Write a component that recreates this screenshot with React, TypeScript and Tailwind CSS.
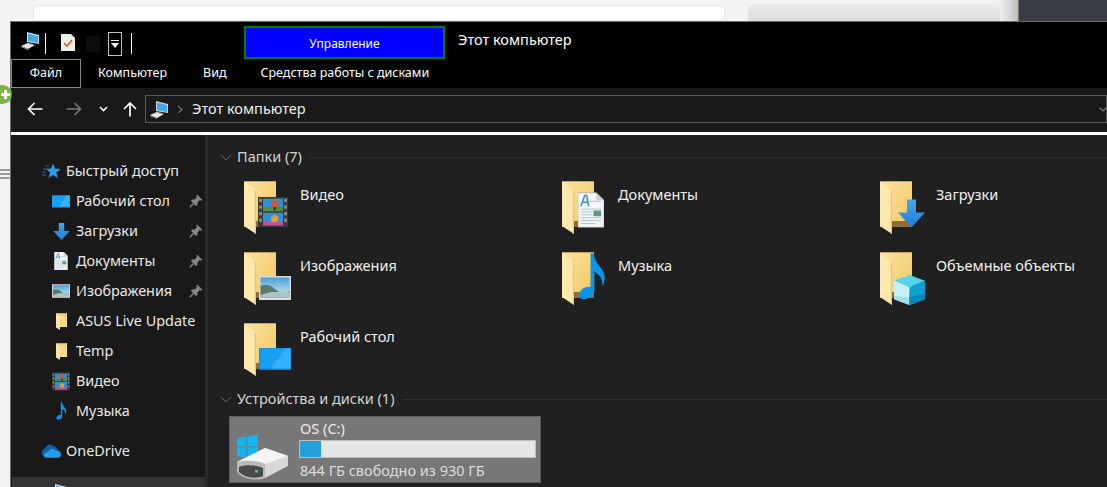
import type { ReactNode } from "react";

const FONT = "font-['Noto_Sans','Open_Sans',sans-serif]";

function PcIcon() {
  return (
    <svg width="20" height="19" viewBox="0 0 20 19">
      <path d="M7 1 L19 4 V13 L7 11 Z" fill="#cfd8e0" />
      <path d="M8 2.5 L18 5 V12 L8 10 Z" fill="#3fa9f0" />
      <path d="M1 15 L8 12 L15 14 L8 18 Z" fill="#e8e8e8" />
      <path d="M1 15 L8 18 V19 L1 16 Z" fill="#9a9a9a" />
      <path d="M10 12 L13 13 L12 14 L9 13 Z" fill="#888" />
    </svg>
  );
}

function Pin() {
  return (
    <svg width="14" height="14" viewBox="0 0 14 14" fill="#858585">
      <path d="M8 0.5 L13.5 6 L12 6.8 L10.8 6 L8.5 8.5 L8.5 11 L7 12 L2 7 L3 5.5 L5.5 5.5 L8 3.2 L7.2 2 Z" />
      <path d="M4 9 L5 10 L1.5 13.5 L0.5 13.5 V12.5 Z" />
    </svg>
  );
}

function SmallFolder() {
  return (
    <svg width="12" height="17" viewBox="0 0 12 17">
      <rect x="1" y="0" width="11" height="14" fill="#f2cf74" />
      <path d="M1 0 H11 V1 H1 Z" fill="#c5a765" />
      <path d="M1 0.5 L5 3 V17 L1 14.5 Z" fill="#fbe6a6" />
      <path d="M5 3 H12 V14 H5 Z" fill="#f7d988" />
    </svg>
  );
}

function Film({ w, h }: { w: number; h: number }) {
  return (
    <svg width={w} height={h} viewBox="0 0 18 18">
      <rect width="18" height="18" fill="#3a3a3a" />
      <g fill="#8c8c8c">
        <rect x="0.7" y="1" width="1.6" height="2" />
        <rect x="0.7" y="5" width="1.6" height="2" />
        <rect x="0.7" y="9" width="1.6" height="2" />
        <rect x="0.7" y="13" width="1.6" height="2" />
        <rect x="15.7" y="1" width="1.6" height="2" />
        <rect x="15.7" y="5" width="1.6" height="2" />
        <rect x="15.7" y="9" width="1.6" height="2" />
        <rect x="15.7" y="13" width="1.6" height="2" />
      </g>
      <rect x="3" y="1" width="12" height="7.5" fill="#2f8fd8" />
      <rect x="3" y="9.5" width="12" height="7.5" fill="#2f8fd8" />
      <rect x="3" y="6" width="12" height="2.5" fill="#4f8f3c" />
      <rect x="3" y="14.5" width="12" height="2.5" fill="#c04fa0" />
      <circle cx="10" cy="4" r="2.2" fill="#d8552c" />
      <circle cx="10" cy="13" r="2.2" fill="#e0a030" />
      <rect x="9.4" y="6" width="1.2" height="2" fill="#222" />
    </svg>
  );
}

function Picture({ w, h }: { w: number; h: number }) {
  return (
    <svg width={w} height={h} viewBox="0 0 32 24">
      <defs>
        <linearGradient id="sky" x1="0" y1="0" x2="0" y2="1">
          <stop offset="0" stopColor="#4d9fd6" />
          <stop offset="1" stopColor="#d6ecf5" />
        </linearGradient>
      </defs>
      <rect width="32" height="24" fill="#d9dde0" />
      <rect x="1.5" y="1.5" width="29" height="20" fill="url(#sky)" />
      <path d="M1.5 10 Q10 7 16 13 T30.5 15 V21.5 H1.5 Z" fill="#5a7a6a" />
      <path d="M12 16 H30.5 V21.5 H1.5 V19 Z" fill="#a8c6c8" />
    </svg>
  );
}

function BlueScreen({ w, h }: { w: number; h: number }) {
  return (
    <svg width={w} height={h} viewBox="0 0 32 22">
      <rect width="32" height="22" fill="#0f7fd0" />
      <rect x="0.5" y="0.5" width="31" height="20" fill="#17a0f5" />
      <path d="M12 20.5 L26 0.5 H31.5 V20.5 Z" fill="#33b1ff" />
    </svg>
  );
}

function DownArrow({ w, h }: { w: number; h: number }) {
  return (
    <svg width={w} height={h} viewBox="0 0 27 28">
      <defs>
        <linearGradient id="arr" x1="0" y1="0" x2="0" y2="1">
          <stop offset="0" stopColor="#45a5ee" />
          <stop offset="1" stopColor="#1f7fd6" />
        </linearGradient>
      </defs>
      <path d="M9 0 H18 V13 H27 L13.5 28 L0 13 H9 Z" fill="url(#arr)" />
    </svg>
  );
}

function Doc({ w, h }: { w: number; h: number }) {
  return (
    <svg width={w} height={h} viewBox="0 0 27 36">
      <path d="M0 0 H19 L27 8 V36 H0 Z" fill="#f4f5f6" stroke="#9a9a9a" strokeWidth="0.6" />
      <path d="M19 0 V8 H27 Z" fill="#c9ccd0" />
      <path d="M3 14 L7 3 L9 3 L11 14 M5 10 H10" fill="none" stroke="#3f8fd8" strokeWidth="1.6" />
      <g stroke="#a9c4d8" strokeWidth="1">
        <line x1="12" y1="9" x2="24" y2="9" />
        <line x1="3" y1="17" x2="24" y2="17" />
        <line x1="3" y1="20" x2="15" y2="20" />
        <line x1="3" y1="23" x2="15" y2="23" />
        <line x1="3" y1="26" x2="24" y2="26" />
        <line x1="3" y1="29" x2="24" y2="29" />
        <line x1="3" y1="32" x2="18" y2="32" />
      </g>
      <rect x="16" y="18.5" width="8" height="6" fill="#5c9a8a" />
    </svg>
  );
}

function Note({ w, h }: { w: number; h: number }) {
  return (
    <svg width={w} height={h} viewBox="0 0 28 48">
      <path
        d="M12 0 H15.5 C16 8 20 11 24 17 C28 23 27 30 24 34 C24.5 28 23 23 16 19 V38 C16 44 9 48 4.5 47.5 C0 47 -1 42 2 38.5 C5 35 9 34 12 35 Z"
        fill="#0a94ea"
      />
    </svg>
  );
}

function Cube() {
  return (
    <svg width="31" height="30" viewBox="0 0 32 31">
      <path d="M16 0 L32 6 L16 13 L0 6 Z" fill="#57d3ea" />
      <path d="M0 6 L16 13 V31 L0 25 Z" fill="#c8f0f8" />
      <path d="M0 21 L16 24 V31 L0 25 Z" fill="#9fe2ee" />
      <path d="M32 6 L16 13 V31 L32 25 Z" fill="#0aa2d0" />
      <path d="M32 19 L16 23 V31 L32 25 Z" fill="#0b86b8" />
    </svg>
  );
}

function Drive() {
  return (
    <svg width="52" height="48" viewBox="0 0 52 48">
      <g fill="#14b4f2">
        <path d="M0 4 L9.5 2.5 V12.5 H0 Z" />
        <path d="M10.5 2.3 L21 0.5 V12.5 H10.5 Z" />
        <path d="M0 13.5 H9.5 V23.5 L0 22 Z" />
        <path d="M10.5 13.5 H21 V25.5 L10.5 23.7 Z" />
      </g>
      <path d="M0 28 L28 14 L51 22 V28 L23 44 L0 34 Z" fill="#e4e4e4" />
      <path d="M28 14 L51 22 L29 30 L0 28 Z" fill="#f4f4f4" />
      <path d="M0 28 C6 26 22 26 28 30 V44 C20 47 6 46 0 38 Z" fill="#b9b9b9" />
      <path d="M2 33 C8 30 20 31 26 34 V42 C18 45 8 44 2 38 Z" fill="#4a4a4a" />
      <path d="M28 30 L51 22 V32 L28 44 Z" fill="#d8d8d8" />
      <rect x="18" y="36" width="3" height="2.5" fill="#3ddc5a" />
    </svg>
  );
}

function Tile({ name, overlay, children }: { name: string; overlay: string; children: ReactNode }) {
  return (
    <div className="flex h-[71px] items-start">
      <div className="relative h-[53px] w-[48px] shrink-0">
        <svg width="32" height="53" viewBox="0 0 32 53" className="block">
          <defs>
            <linearGradient id="fold" x1="0" y1="0" x2="1" y2="1">
              <stop offset="0" stopColor="#fbe3a0" />
              <stop offset="1" stopColor="#f2c661" />
            </linearGradient>
          </defs>
          <rect x="0" y="0" width="32" height="46" fill="url(#fold)" />
          <rect x="0" y="0" width="32" height="1" fill="#bfa266" />
          <rect x="12" y="40" width="20" height="6" fill="#8a6f3c" />
          <path d="M0 1 L12 10 V53 L0 45 Z" fill="#fde9ae" />
          <path d="M12 10 V53 L10.8 52 V9 Z" fill="#e9c778" />
        </svg>
        <div className={`absolute flex items-end ${overlay}`}>{children}</div>
      </div>
      <span className="ml-2 mt-[3px] text-[14.5px] leading-5 text-[#f0f0f0]">{name}</span>
    </div>
  );
}

function GroupHeader({ title }: { title: string }) {
  return (
    <div className="flex h-5 items-center">
      <svg width="12" height="7" viewBox="0 0 12 7" className="shrink-0">
        <path d="M1 1 L6 6 L11 1" fill="none" stroke="#6a6a6a" strokeWidth="1" />
      </svg>
      <span className="ml-[5px] whitespace-nowrap text-[14.5px] text-[#d4d4d4]">{title}</span>
      <div className="ml-2 h-px flex-1 bg-[#2e2e2e]" />
    </div>
  );
}

function NavRow({
  icon,
  label,
  pinned,
  indent = true,
}: {
  icon: ReactNode;
  label: string;
  pinned?: boolean;
  indent?: boolean;
}) {
  return (
    <div className={`flex h-[30px] shrink-0 items-center ${indent ? "pl-[41px]" : "pl-[30px]"}`}>
      <div className={`flex shrink-0 items-center justify-center ${indent ? "w-[18px]" : "w-[20px]"}`}>
        {icon}
      </div>
      <span className={`whitespace-nowrap text-[14.4px] text-[#e8e8e8] ${indent ? "ml-[6px]" : "ml-[5px]"}`}>
        {label}
      </span>
      {pinned && (
        <div className="ml-auto mr-[2px]">
          <Pin />
        </div>
      )}
    </div>
  );
}

function Sidebar() {
  return (
    <aside className="flex w-[194px] shrink-0 flex-col overflow-hidden bg-[#191919] pt-[21px]">
      <NavRow
        indent={false}
        label="Быстрый доступ"
        icon={
          <svg width="20" height="16" viewBox="0 0 20 16">
            <path d="M12 0.5 L14 5.5 L19.5 6 L15.3 9.5 L16.7 15 L12 12 L7.5 15 L9 9.5 L5 6 L10 5.5 Z" fill="#2b9bec" />
            <path d="M4 3 H8 M2 6 H6 M1 9 H5 M1 12 H5" stroke="#1d6fb0" strokeWidth="1" />
          </svg>
        }
      />
      <NavRow pinned label="Рабочий стол" icon={<BlueScreen w={18} h={13} />} />
      <NavRow pinned label="Загрузки" icon={<DownArrow w={17} h={17} />} />
      <NavRow pinned label="Документы" icon={<Doc w={14} h={18} />} />
      <NavRow pinned label="Изображения" icon={<Picture w={18} h={14} />} />
      <NavRow label="ASUS Live Update" icon={<SmallFolder />} />
      <NavRow label="Temp" icon={<SmallFolder />} />
      <NavRow label="Видео" icon={<Film w={18} h={19} />} />
      <NavRow label="Музыка" icon={<Note w={11} h={18} />} />
      <div className="h-[10px] shrink-0" />
      <NavRow
        indent={false}
        label="OneDrive"
        icon={
          <svg width="21" height="14" viewBox="0 0 21 14">
            <path d="M4 5 C5 1 10 -1 13 2 C15 2 17 4 17 6 L8 12 H3 C0 11 0 6 4 5 Z" fill="#0a62b8" />
            <path d="M8 7 C10 4 14 4 15 6.5 C18 5.5 21 8 21 11 C21 13 19 14 18 14 H6 C3 14 2 11 4 9.5 C5 8.5 7 8 8 7 Z" fill="#2a9be8" />
          </svg>
        }
      />
      <div className="ml-px mt-[11px] flex h-[30px] shrink-0 items-center bg-[#333333] pl-[36px]">
        <PcIcon />
        <span className="-ml-px text-[14.4px] text-[#e8e8e8]">Этот компьютер</span>
      </div>
    </aside>
  );
}

export default function App() {
  return (
    <div className={`${FONT} relative flex h-[487px] w-[1107px] flex-col overflow-hidden bg-[#f3f3f3]`}>
      {/* page behind the window */}
      <div className="flex h-[21px] shrink-0 items-stretch">
        <div className="ml-[33px] mt-[5px] w-[692px] rounded-t-sm border border-[#e8e8e8] bg-white" />
        <div className="ml-[23px] mt-[4px] w-[252px] rounded-t-sm bg-gradient-to-b from-[#ececec] to-[#dcdcdc]" />
        <div className="w-[18px] bg-gradient-to-r from-[#f0f0f0] to-[#bdbdbd]" />
        <div className="flex-1 border-l border-[#777] bg-[#3a3d44]" />
      </div>

      <div className="flex min-h-0 flex-1">
        {/* left strip with the collapsed grip */}
        <div className="flex w-[10px] shrink-0 flex-col pt-[148px]">
          <div className="h-[2px] bg-[#9a9a9a]" />
          <div className="mt-[2px] h-[2px] bg-[#9a9a9a]" />
          <div className="mt-[2px] h-[2px] bg-[#9a9a9a]" />
        </div>

        <div className="flex min-w-0 flex-1 flex-col border-l border-t border-[#6e6e6e] bg-black">
          {/* quick access and contextual tab */}
          <div className="flex h-[37px] shrink-0 items-stretch">
            <div className="ml-[9px] mt-[9px] h-[19px]">
              <PcIcon />
            </div>
            <div className="ml-[5px] mt-[11px] h-[21px] w-px bg-white" />
            <div className="ml-[15px] mt-[12px]">
              <svg width="14" height="17" viewBox="0 0 14 17">
                <path d="M0 0 H10 L14 4 V17 H0 Z" fill="#f2efe8" />
                <path d="M3 9 L6 12 L11 6" fill="none" stroke="#e8541c" strokeWidth="1.6" />
              </svg>
            </div>
            <div className="ml-[11px] mt-[14px] h-[16px] w-[14px] bg-[#0d0d0d]" />
            <div className="ml-[8px] mt-[10px] flex h-[24px] w-[14px] flex-col items-center justify-center border border-[#c0c0c0]">
              <div className="h-px w-[8px] bg-white" />
              <svg width="8" height="5" viewBox="0 0 8 5" className="mt-[2px]">
                <path d="M0 0 H8 L4 5 Z" fill="#fff" />
              </svg>
            </div>
            <div className="ml-[9px] mt-[11px] h-[21px] w-px bg-white" />
            <div className="ml-[112px] mt-[4px] flex w-[201px] items-center justify-center border-2 border-[#008000] bg-[#0000ff] pt-[2px] text-[12px] text-white">
              Управление
            </div>
            <span className="ml-[13px] mt-[7px] text-[14.5px] text-white">Этот компьютер</span>
          </div>

          {/* ribbon tabs */}
          <div className="flex h-[29px] shrink-0 items-stretch text-[12.5px] text-white">
            <div className="flex w-[70px] items-center justify-center border border-[#8a8a8a]">Файл</div>
            <span className="ml-[17px] self-center">Компьютер</span>
            <span className="ml-[36px] self-center">Вид</span>
            <span className="ml-[34px] self-center">Средства работы с дисками</span>
          </div>

          {/* navigation bar */}
          <div className="flex h-[44px] shrink-0 items-center bg-[#191919] pb-[2px] pl-[16px]">
            <svg width="16" height="14" viewBox="0 0 16 14">
              <path d="M15.5 7 H2 M7.5 1 L1.5 7 L7.5 13" fill="none" stroke="#fff" strokeWidth="1.7" />
            </svg>
            <svg width="16" height="14" viewBox="0 0 16 14" className="ml-[23px]">
              <path d="M0.5 7 H14 M8.5 1 L14.5 7 L8.5 13" fill="none" stroke="#777" strokeWidth="1.7" />
            </svg>
            <svg width="9" height="6" viewBox="0 0 9 6" className="ml-[17px]">
              <path d="M1 1 L4.5 4.5 L8 1" fill="none" stroke="#fff" strokeWidth="1.6" />
            </svg>
            <svg width="14" height="16" viewBox="0 0 14 16" className="ml-[15px]">
              <path d="M7 15.5 V2 M1 8 L7 2 L13 8" fill="none" stroke="#fff" strokeWidth="1.7" />
            </svg>
            <div className="ml-[8px] flex h-[28px] flex-1 items-center border border-[#5a5a5a] pl-[3px]">
              <PcIcon />
              <svg width="6" height="9" viewBox="0 0 6 9" className="ml-[8px]">
                <path d="M1 1 L5 4.5 L1 8" fill="none" stroke="#6e6e6e" strokeWidth="1.4" />
              </svg>
              <span className="ml-[9px] text-[14.5px] text-[#f0f0f0]">Этот компьютер</span>
              <svg width="8" height="5" viewBox="0 0 8 5" className="ml-auto -mr-[1px]">
                <path d="M0.5 0.5 L4 4 L7.5 0.5" fill="none" stroke="#777" strokeWidth="1.2" />
              </svg>
            </div>
          </div>

          {/* white rule under the nav bar */}
          <div className="h-[3px] shrink-0 bg-white" />

          <div className="flex min-h-0 flex-1">
            <Sidebar />
            <div className="w-[3px] shrink-0 bg-[#2a2a2a]" />
            <main className="min-w-0 flex-1 bg-[#202020] pl-[12px] pt-[12px]">
              <GroupHeader title="Папки (7)" />
              <div className="mt-[14px] grid grid-cols-[318px_318px_1fr] pl-[24px]">
                <Tile name="Видео" overlay="right-[4px] bottom-[5px]">
                  <Film w={30} h={34} />
                </Tile>
                <Tile name="Документы" overlay="right-[6px] bottom-[6px]">
                  <Doc w={26} h={36} />
                </Tile>
                <Tile name="Загрузки" overlay="right-[3px] bottom-[6px]">
                  <DownArrow w={27} h={29} />
                </Tile>
                <Tile name="Изображения" overlay="right-[1px] bottom-[5px]">
                  <Picture w={32} h={24} />
                </Tile>
                <Tile name="Музыка" overlay="right-[4px] bottom-[4px]">
                  <Note w={27} h={49} />
                </Tile>
                <Tile name="Объемные объекты" overlay="right-[3px] bottom-0">
                  <Cube />
                </Tile>
                <Tile name="Рабочий стол" overlay="right-[1px] bottom-[5px]">
                  <BlueScreen w={32} h={24} />
                </Tile>
              </div>
              <div className="mt-[-5px]">
                <GroupHeader title="Устройства и диски (1)" />
              </div>
              <div className="ml-[9px] mt-[7px] flex h-[67px] w-[312px] items-stretch border border-[#5e5e5e] bg-[#777777]">
                <div className="ml-[7px] mt-[17px]">
                  <Drive />
                </div>
                <div className="ml-[10px] flex w-[237px] flex-col">
                  <span className="ml-px mt-[1px] h-[20px] text-[14.5px] leading-5 text-[#ececec]">OS (C:)</span>
                  <div className="mt-[2px] h-[18px] border border-[#bdbdbd] bg-[#e6e6e6]">
                    <div className="h-full w-[9%] bg-[#26a0da]" />
                  </div>
                  <span className="ml-px mt-[2px] whitespace-nowrap text-[14.5px] leading-5 text-[#dcdcdc]">
                    844 ГБ свободно из 930 ГБ
                  </span>
                </div>
              </div>
            </main>
          </div>
        </div>
      </div>

      {/* green plus badge poking out from behind the window */}
      <div className="absolute left-[-7px] top-[85px] flex h-[19px] w-[19px] items-center justify-center rounded-full bg-[#7cb342]">
        <svg width="11" height="11" viewBox="0 0 11 11" className="ml-[5px]">
          <path d="M5.5 1 V10 M1 5.5 H10" stroke="#fff" strokeWidth="3" />
        </svg>
      </div>
    </div>
  );
}
